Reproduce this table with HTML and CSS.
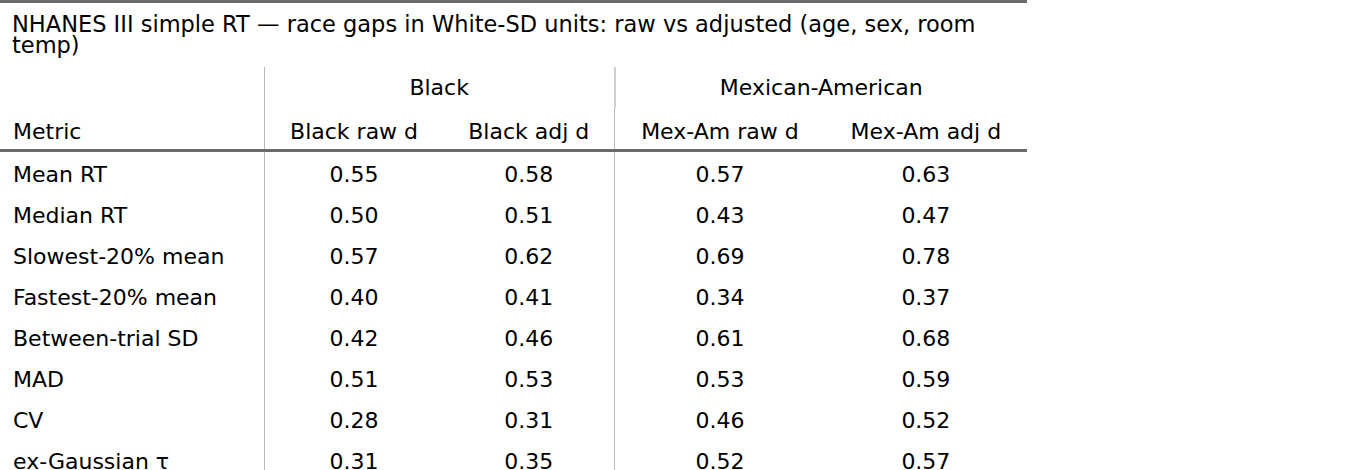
FILE: index.html
```html
<!DOCTYPE html>
<html lang="en">
<head>
<meta charset="utf-8">
<title>NHANES III simple RT</title>
<link rel="stylesheet" href="styles.css">
</head>
<body>
<div class="gt">
  <div class="gt-title">NHANES III simple RT — race gaps in White-SD units: raw vs adjusted (age, sex, room temp)</div>
  <table class="gt-table">
    <colgroup>
      <col class="c-metric">
      <col class="c-black">
      <col class="c-black">
      <col class="c-mex">
      <col class="c-mex">
    </colgroup>
    <thead>
      <tr class="spanners">
        <th class="blank"></th>
        <th class="spanner sp-black" colspan="2">Black</th>
        <th class="spanner sp-mex" colspan="2">Mexican-American</th>
      </tr>
      <tr class="labels">
        <th class="lab-metric">Metric</th>
        <th class="lab num grp-start">Black raw d</th>
        <th class="lab num">Black adj d</th>
        <th class="lab num grp-start">Mex-Am raw d</th>
        <th class="lab num">Mex-Am adj d</th>
      </tr>
    </thead>
    <tbody>
      <tr><td class="stub">Mean RT</td><td class="num grp-start">0.55</td><td class="num">0.58</td><td class="num grp-start">0.57</td><td class="num">0.63</td></tr>
      <tr><td class="stub">Median RT</td><td class="num grp-start">0.50</td><td class="num">0.51</td><td class="num grp-start">0.43</td><td class="num">0.47</td></tr>
      <tr><td class="stub">Slowest-20% mean</td><td class="num grp-start">0.57</td><td class="num">0.62</td><td class="num grp-start">0.69</td><td class="num">0.78</td></tr>
      <tr><td class="stub">Fastest-20% mean</td><td class="num grp-start">0.40</td><td class="num">0.41</td><td class="num grp-start">0.34</td><td class="num">0.37</td></tr>
      <tr><td class="stub">Between-trial SD</td><td class="num grp-start">0.42</td><td class="num">0.46</td><td class="num grp-start">0.61</td><td class="num">0.68</td></tr>
      <tr><td class="stub">MAD</td><td class="num grp-start">0.51</td><td class="num">0.53</td><td class="num grp-start">0.53</td><td class="num">0.59</td></tr>
      <tr><td class="stub">CV</td><td class="num grp-start">0.28</td><td class="num">0.31</td><td class="num grp-start">0.46</td><td class="num">0.52</td></tr>
      <tr><td class="stub">ex-Gaussian τ</td><td class="num grp-start">0.31</td><td class="num">0.35</td><td class="num grp-start">0.52</td><td class="num">0.57</td></tr>
    </tbody>
  </table>
</div>
</body>
</html>
```

FILE: styles.css
```css
html, body {
  margin: 0;
  padding: 0;
  background: #ffffff;
}

body {
  font-family: "DejaVu Sans", "Liberation Sans", sans-serif;
  color: #000000;
}

.gt {
  width: 1027px;
  border-top: 3px solid #6b6b6b;
}

.gt-title {
  font-size: 22.5px;
  line-height: 21px;
  padding: 11px 0 11px 12px;
  height: 42px;
  overflow: hidden;
}

.gt-table {
  width: 1027px;
  border-collapse: collapse;
  table-layout: fixed;
  font-size: 22px;
  line-height: 25px;
}

.c-metric { width: 264px; }
.c-black { width: 175px; }
.c-mex { width: 206px; }

.gt-table th {
  font-weight: normal;
  white-space: nowrap;
}

.spanners th {
  padding: 8px 12px 8px;
  text-align: center;
}

.spanner.sp-black {
  border-left: 1px solid #b8b8b8;
}

.spanner.sp-mex {
  border-left: 2px solid #cfcfcf;
}

.labels th {
  padding: 11px 10px 5px 14px;
  text-align: center;
  border-bottom: 1px solid #a8a8a8;
}

.labels th.lab-metric {
  text-align: left;
  padding-left: 13px;
}

tbody tr:first-child td {
  border-top: 3px solid #6b6b6b;
}

.gt-table td {
  padding: 10px 10px 6px 14px;
  white-space: nowrap;
}

.gt-table td.stub {
  text-align: left;
  padding-left: 13px;
}

.num {
  text-align: center;
}

.grp-start {
  border-left: 1px solid #b8b8b8;
}
```
